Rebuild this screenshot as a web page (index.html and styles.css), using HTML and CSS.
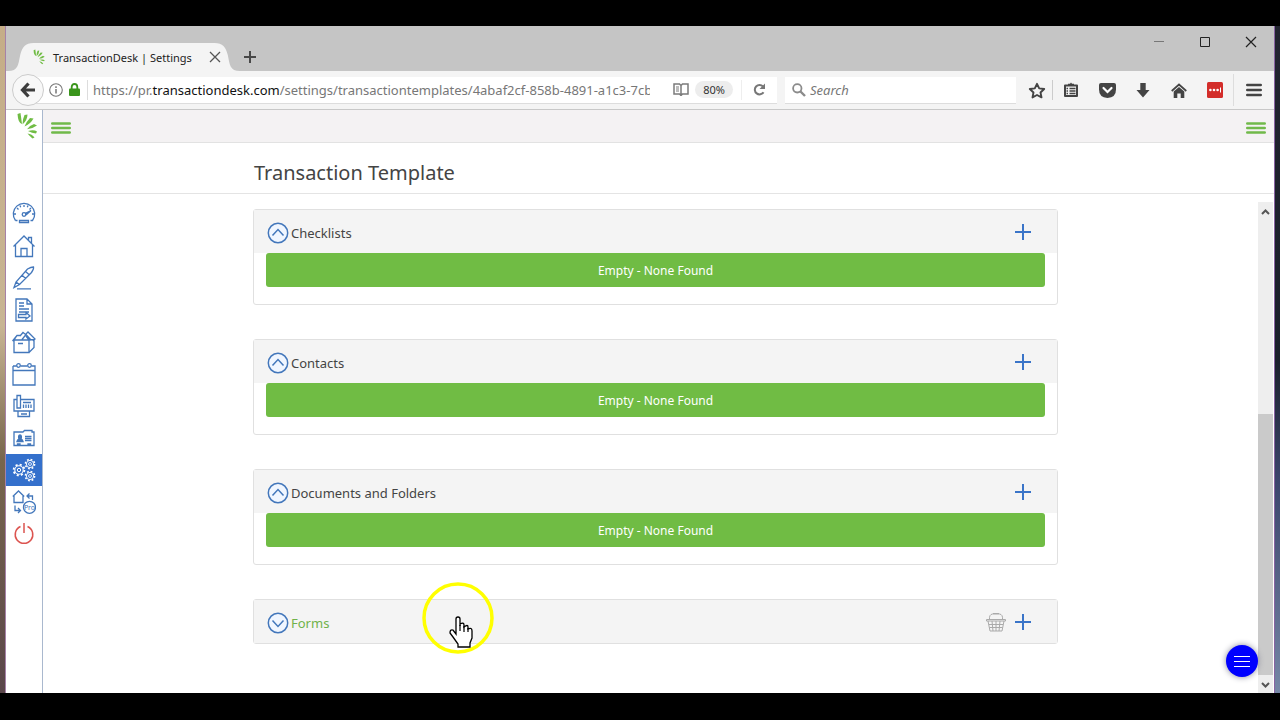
FILE: index.html
```html
<!DOCTYPE html>
<html lang="en">
<head>
<meta charset="utf-8">
<title>TransactionDesk | Settings</title>
<link rel="stylesheet" href="styles.css">
</head>
<body>
<svg class="defs" aria-hidden="true">
  <symbol id="leaf" viewBox="0 0 22 28">
    <g fill="#70bc44">
      <path d="M1.500 2 4.500 1 6 12Q2 11 1.500 2Z"/>
      <path d="M8.500 3 11.500 2.500Q11.500 8 6.500 12.500Q6.500 7 8.500 3Z"/>
      <path d="M14 6 17.500 6.500Q14.500 12 8.500 14.500Q10 10 14 6Z"/>
      <path d="M18 12 21 13.500Q17 16.500 11 17.200Q13.500 13.500 18 12Z"/>
      <path d="M12 19Q18 17.500 21 19.500L20 21.500Q16 21 12 19Z"/>
      <path d="M11.500 21.500Q16 22 18.500 25.500L16.500 26.500Q13.500 24 11.500 21.500Z"/>
    </g>
  </symbol>
  <symbol id="bars" viewBox="0 0 20 12"><path d="M1.300 1.500H18.700M1.300 6H18.700M1.300 10.500H18.700" stroke="currentColor" stroke-width="2.600" stroke-linecap="round"/></symbol>
  <symbol id="plus" viewBox="0 0 16 16"><path d="M8 0V16M0 8H16" stroke="currentColor" stroke-width="2"/></symbol>
  <symbol id="up" viewBox="0 0 22 22"><circle cx="11" cy="11" r="9.700" fill="#f0f6ff" stroke="currentColor" stroke-width="1.500"/><path d="M5.500 13.500 11 7.500 16.500 13.500" fill="none" stroke="currentColor" stroke-width="1.500"/></symbol>
  <symbol id="down" viewBox="0 0 22 22"><circle cx="11" cy="11" r="9.700" fill="#f0f6ff" stroke="currentColor" stroke-width="1.500"/><path d="M5.500 8.500 11 14.500 16.500 8.500" fill="none" stroke="currentColor" stroke-width="1.500"/></symbol>
  <symbol id="gear" viewBox="-7 -7 14 14"><circle r="4.200" fill="none" stroke="currentColor" stroke-width="1.100"/><circle r="5.400" fill="none" stroke="currentColor" stroke-width="1.800" stroke-dasharray="2.100 2.141"/><circle r="1.700" fill="none" stroke="currentColor"/></symbol>
</svg>

<div class="desktop">
<div class="window">
  <header class="titlebar">
    <div class="tab">
      <svg class="tab-shape" viewBox="0 0 228 28" preserveAspectRatio="none"><path d="M0 28C10 28 10 22 12 12C14 4 17 0 25 0H203C211 0 214 4 216 12C218 22 218 28 228 28Z" fill="#f4f4f4"/></svg>
      <svg class="tab-logo"><use href="#leaf"/></svg>
      <span class="tab-title">TransactionDesk | Settings</span>
      <button class="plain tab-close" aria-label="Close tab"><svg width="12" height="12" viewBox="0 0 12 12"><path d="M1 1 11 11M11 1 1 11" stroke="#555" stroke-width="1.300"/></svg></button>
    </div>
    <button class="plain new-tab" aria-label="New tab"><svg width="12" height="12" viewBox="0 0 12 12"><path d="M6 0V12M0 6H12" stroke="#484848" stroke-width="2"/></svg></button>
    <div class="window-buttons">
      <button class="plain" aria-label="Minimize"><svg width="12" height="12" viewBox="0 0 12 12"><path d="M1 5.500H11" stroke="#777"/></svg></button>
      <button class="plain" aria-label="Maximize"><svg width="12" height="12" viewBox="0 0 12 12"><path d="M1.500 1.500H10.500V10.500H1.500Z" fill="none" stroke="#222"/></svg></button>
      <button class="plain" aria-label="Close"><svg width="12" height="12" viewBox="0 0 12 12"><path d="M1 1 11 11M11 1 1 11" stroke="#222" stroke-width="1.200"/></svg></button>
    </div>
  </header>

  <div class="toolbar">
    <button class="plain back" aria-label="Back"><svg width="16" height="16" viewBox="0 0 16 16"><path d="M8.500 1.500 2.500 8 8.500 14.500M3 8H15" fill="none" stroke="#3d3d3d" stroke-width="3.200"/></svg></button>
    <div class="address">
      <svg width="14" height="14" viewBox="0 0 14 14"><circle cx="7" cy="7" r="6.300" fill="none" stroke="#777" stroke-width="1.100"/><path d="M7 6V10.500M7 3.300V4.900" stroke="#777" stroke-width="1.500"/></svg>
      <svg width="11" height="13" viewBox="0 0 11 13"><path d="M2.700 6V4Q2.700 1 5.500 1T8.300 4V6" fill="none" stroke="#3a951c" stroke-width="1.800"/><rect y="5.500" width="11" height="7.500" rx="1" fill="#3a951c"/></svg>
      <span class="url">https://pr.<b>transactiondesk.com</b>/settings/transactiontemplates/4abaf2cf-858b-4891-a1c3-7cb</span>
      <svg class="reader" width="16" height="13" viewBox="0 0 16 13"><path d="M1 1H6.500L8 2.500 9.500 1H15V11H9.500L8 12.500 6.500 11H1ZM8 2.500V12" fill="none" stroke="#7b7b7b" stroke-width="1.500"/><path d="M3 4H6M3 6H6M3 8H6" stroke="#7b7b7b"/></svg>
      <button class="plain percent">80%</button>
      <button class="plain reload" aria-label="Reload"><svg width="13" height="13" viewBox="0 0 13 13"><path d="M10.500 9.200A4.700 4.700 0 1 1 10 3.500" fill="none" stroke="#777" stroke-width="2"/><path d="M12 .5V6H6.500Z" fill="#777"/></svg></button>
    </div>
    <label class="search">
      <svg width="14" height="14" viewBox="0 0 14 14"><circle cx="5.300" cy="5.300" r="4.200" fill="none" stroke="#8b8b8b" stroke-width="1.800"/><path d="M8.500 8.500 13 13" stroke="#8b8b8b" stroke-width="2.400"/></svg>
      <input type="text" placeholder="Search" aria-label="Search">
    </label>
    <div class="tools">
      <button class="plain star" aria-label="Bookmark"><svg width="18" height="17" viewBox="0 0 18 17"><path d="M9 1.800 11.200 6.400 16.200 7 12.500 10.500 13.500 15.400 9 13 4.500 15.400 5.500 10.500 1.800 7 6.800 6.400Z" fill="none" stroke="#444" stroke-width="1.900" stroke-linejoin="round"/></svg></button>
      <button class="plain" aria-label="Bookmarks list"><svg width="16" height="16" viewBox="0 0 16 16"><path d="M2 3.500H14V14H2Z" fill="none" stroke="#444" stroke-width="2" stroke-linejoin="round"/><path d="M5 3V1.700H7L8 .5 9 1.700H11V3Z" fill="#444"/><path d="M3.500 6.500H5M6.500 6.500H12.500M3.500 9H5M6.500 9H12.500M3.500 11.500H5M6.500 11.500H12.500" stroke="#444" stroke-width="1.500"/></svg></button>
      <button class="plain" aria-label="Pocket"><svg width="17" height="15" viewBox="0 0 17 15"><path d="M2 0H15Q17 0 17 2V6.500Q17 14.500 8.500 15Q0 14.500 0 6.500V2Q0 0 2 0Z" fill="#444"/><path d="M4.500 5 8.500 9 12.500 5" fill="none" stroke="#fff" stroke-width="2.200" stroke-linecap="round"/></svg></button>
      <button class="plain" aria-label="Downloads"><svg width="14" height="15" viewBox="0 0 14 15"><path d="M4.300 0H9.700V7H13.500L7 14.500 .5 7H4.300Z" fill="#444"/></svg></button>
      <button class="plain" aria-label="Home"><svg width="16" height="15" viewBox="0 0 16 15"><path d="M.7 8 8 1.500 15.300 8" fill="none" stroke="#444" stroke-width="1.700"/><path d="M2.700 8.500 8 4 13.300 8.500V15H9.700V10.500H6.300V15H2.700Z" fill="#444"/></svg></button>
      <button class="plain" aria-label="Password manager"><svg width="16" height="16" viewBox="0 0 16 16"><rect width="16" height="16" rx="1.500" fill="#d32d2a"/><circle cx="3.400" cy="8" r="1.300" fill="#fff"/><circle cx="7" cy="8" r="1.300" fill="#fff"/><circle cx="10.600" cy="8" r="1.300" fill="#fff"/><path d="M13.500 5.500V10.500" stroke="#fff"/></svg></button>
    </div>
    <button class="plain menu" aria-label="Menu"><svg width="16" height="14" viewBox="0 0 16 14"><path d="M1.300 2H14.700M1.300 7H14.700M1.300 12H14.700" stroke="#444" stroke-width="2.600" stroke-linecap="round"/></svg></button>
  </div>

  <div class="app">
    <nav class="rail" aria-label="Main">
      <a class="brand" href="#" aria-label="TransactionDesk"><svg width="22" height="28"><use href="#leaf"/></svg></a>
      <a href="#" aria-label="Dashboard"><svg viewBox="0 0 24 24"><path d="M3.500 18.500A10.700 10.700 0 1 1 20.500 18.500H18.500M3.500 18.500H5.500M12 3V5M5 6 6.500 7.500M19 6 17.500 7.500M2 12H4M22 12H20M8 3.500 8.700 5.300M16 3.500 15.300 5.300"/><circle cx="12" cy="12.500" r="1.800"/><path d="M13.500 11.300 19 8.500 14 13M7.500 18.500H16.500V20.500H7.500Z"/></svg></a>
      <a href="#" aria-label="Properties"><svg viewBox="0 0 24 24"><path d="M1.500 12.500 12 2 22.500 12.500M3.500 11V22.500H20.500V11M9 22V14.500H15V22M16.500 6V3.500H19.500V9"/></svg></a>
      <a href="#" aria-label="Signatures"><svg viewBox="0 0 24 24"><path d="M2 21.500 4 16 15.500 3Q19 1 21.500 1Q22 3 19.500 6.500L7.500 18.500ZM10 9 13.500 12.500M13 5 17.500 9M14.500 11.500 18 8M4 16 7.500 18.500M5 22.800H19"/></svg></a>
      <a href="#" aria-label="Forms"><svg viewBox="0 0 24 24"><path d="M4 1H15L20 6V23H4ZM15 1V6H20M7 5H12M7 8H12M7 11H17M7 14H17M6.500 16.500H14V14.500L18 18 14 21V19.500H6.500Z"/></svg></a>
      <a href="#" aria-label="Transactions"><svg viewBox="0 0 24 24"><path d="M2 10H17V22.500H2ZM2 10 5 5.500H9M17 10 14 6M17 22.500 22 17.500V9.500L17 10M.5 11 5 5.500M6 13.500H11M8 6 11 2.500 13.500 4.500 16 2 23 9 21 11M10 9.500 14 4.500 19 10"/></svg></a>
      <a href="#" aria-label="Calendar"><svg viewBox="0 0 24 24"><path d="M1 4H4.500M8.500 4H15.500M19.500 4H23V23H1V4M1 8.500H23"/><circle cx="6.500" cy="3.500" r="1.800"/><circle cx="17.500" cy="3.500" r="1.800"/></svg></a>
      <a href="#" aria-label="Fax"><svg viewBox="0 0 24 24"><path d="M5 1.500H8.500V14H5ZM5 5.500H2V17H22V5.500H8.500M11 8.500H19M11.500 10.500V14M14 10.500V14M16.500 10.500V14M19 10.500V14M6 17V22.500H17.500V17M9 20H15"/></svg></a>
      <a href="#" aria-label="Contacts"><svg viewBox="0 0 24 24"><path d="M2 6H11L12.500 4.500H20V6H22V19.500H2ZM5.500 19.500V18H8V19.500M16 19.500V18H18.500V19.500M13 10.500H19.500M13 12.500H19.500M13 14.500H19.500"/><path d="M5 15.500Q5.500 13.500 7 13.500Q5.800 9 8 9T9 13.500Q10.500 13.500 11 15.500Z" fill="currentColor"/></svg></a>
      <a class="active" href="#" aria-label="Settings" aria-current="page"><svg viewBox="0 0 24 24"><use href="#gear" x="0" y="5" width="14" height="14"/><use href="#gear" x="12" y="0" width="12" height="12"/><use href="#gear" x="12" y="12" width="12" height="12"/></svg></a>
      <a href="#" aria-label="Switch to Pro"><svg viewBox="0 0 24 24"><path d="M.8 6.500 6.500 1 12.200 6.500M2 6V12.500H11V6M20.500 10V6H15.500M17.500 3.500 15 6 17.500 8.500M3 15.500V20.500H8M6 18 8.500 20.500 6 23"/><circle cx="17.500" cy="17.300" r="6"/><text x="17.500" y="19.500" class="pro">Pro</text></svg></a>
      <a class="power" href="#" aria-label="Log out"><svg viewBox="0 0 24 24"><path d="M8.500 4.500A8.800 8.800 0 1 0 15.500 4.500M12 1V11"/></svg></a>
    </nav>

    <main class="main">
      <div class="topbar">
        <button class="plain" aria-label="Toggle navigation"><svg width="20" height="12"><use href="#bars"/></svg></button>
        <button class="plain" aria-label="Toggle panel"><svg width="20" height="12"><use href="#bars"/></svg></button>
      </div>
      <div class="heading"><h1>Transaction Template</h1></div>
      <div class="scroller">
        <div class="cards">
          <section class="card">
            <header><button class="plain toggle"><svg width="22" height="22"><use href="#up"/></svg><span>Checklists</span></button><button class="plain add" aria-label="Add checklist"><svg width="16" height="16"><use href="#plus"/></svg></button></header>
            <p class="empty">Empty - None Found</p>
          </section>
          <section class="card">
            <header><button class="plain toggle"><svg width="22" height="22"><use href="#up"/></svg><span>Contacts</span></button><button class="plain add" aria-label="Add contact"><svg width="16" height="16"><use href="#plus"/></svg></button></header>
            <p class="empty">Empty - None Found</p>
          </section>
          <section class="card">
            <header><button class="plain toggle"><svg width="22" height="22"><use href="#up"/></svg><span>Documents and Folders</span></button><button class="plain add" aria-label="Add document"><svg width="16" height="16"><use href="#plus"/></svg></button></header>
            <p class="empty">Empty - None Found</p>
          </section>
          <section class="card collapsed">
            <header><button class="plain toggle"><svg width="22" height="22"><use href="#down"/></svg><span>Forms</span></button>
              <button class="plain basket" aria-label="Basket"><svg width="20" height="20" viewBox="0 0 20 20"><path d="M.5 7.500H19.500V9H.5ZM2 9 4 19H16L18 9M3 12.500H17M3.500 15.500H16.500M6 9 7 19M10 9V19M14 9 13 19M3.500 7.500Q3 2.500 6.500 2H13.500Q17 2.500 16.500 7.500M7 1.500H13" fill="none" stroke="#aaa"/></svg></button>
              <button class="plain add" aria-label="Add form"><svg width="16" height="16"><use href="#plus"/></svg></button></header>
            <svg class="pointer" width="72" height="72" viewBox="0 0 72 72" aria-hidden="true">
              <circle cx="36" cy="36" r="34" fill="none" stroke="#ff0" stroke-width="3.500"/>
              <path d="M34 52V37Q34 35 36 35T38 37V44L38 42Q42 40 42 43V45Q46 42 46 45V47Q50 45 50 49V56L48 61V65H36V62L31 55L28 51Q28 47 31 48Z" fill="#fff" stroke="#000" stroke-width="1.300"/>
              <path d="M38 43V49M42 44V50M46 46V50" stroke="#000" stroke-width="1.200"/>
            </svg>
          </section>
        </div>
        <div class="scrollbar" aria-hidden="true">
          <svg width="15" height="18" viewBox="0 0 15 18"><path d="M4 12 7.500 8.500 11 12" fill="none" stroke="#555" stroke-width="2"/></svg>
          <div class="track"><div class="thumb"></div></div>
          <svg width="15" height="18" viewBox="0 0 15 18"><path d="M4 8 7.500 11.500 11 8" fill="none" stroke="#555" stroke-width="2"/></svg>
        </div>
      </div>
      <button class="plain fab" aria-label="Quick menu"><svg width="16" height="12" viewBox="0 0 16 12"><path d="M0 1.500H16M0 6.500H16M0 11.500H16" stroke="#fff"/></svg></button>
    </main>
  </div>
</div>
</div>
</body>
</html>
```
FILE: styles.css
```css
* { box-sizing: border-box; }
body {
  margin: 0;
  min-height: 100vh;
  display: flex;
  padding: 26px 0 27px;
  background: #000;
  font-family: "Noto Sans", sans-serif;
}
.defs { position: absolute; width: 0; height: 0; }
.plain {
  margin: 0;
  padding: 0;
  border: 0;
  background: none;
  color: inherit;
  font: inherit;
  display: flex;
  align-items: center;
  justify-content: center;
}
.desktop {
  flex: 1;
  min-width: 0;
  display: flex;
  padding: 0 5px;
  background:
    linear-gradient(#c5ad87, #c8b593 45%, #78664d 65%, #5a464a) left / 50% 100% no-repeat,
    linear-gradient(#222430, #1b202c 50%, #3c456c 68%, #7687a6) right / 50% 100% no-repeat;
}
.window {
  flex: 1;
  min-width: 0;
  display: flex;
  flex-direction: column;
  border-left: 1px solid #a682a8;
  border-right: 1px solid #8863a2;
  background: #fff;
}

/* Browser chrome */
.titlebar {
  height: 45px;
  display: flex;
  align-items: flex-end;
  background: #c5c5c5;
}
.tab {
  position: relative;
  width: 232px;
  height: 28px;
  margin-left: 2px;
  padding: 0 19px 0 24px;
  display: flex;
  align-items: center;
  font-size: 11px;
  color: #222;
}
.tab-shape { position: absolute; inset: 0; width: 100%; height: 100%; }
.tab-logo, .tab-title, .tab-close { position: relative; }
.tab-logo { width: 14px; height: 16px; margin-right: 7px; flex: none; }
.tab-title { flex: 1; white-space: nowrap; }
.tab-close { width: 12px; height: 28px; }
.new-tab { width: 20px; height: 28px; }
.window-buttons { margin-left: auto; align-self: flex-start; display: flex; }
.window-buttons button { width: 46px; height: 31px; }

.toolbar {
  height: 39px;
  padding-left: 6px;
  display: flex;
  align-items: center;
  background: #f4f4f4;
  border-bottom: 1px solid #c8c8c8;
}
.back {
  position: relative;
  flex: none;
  width: 32px;
  height: 32px;
  border: 1px solid #ccc;
  border-radius: 50%;
  background: #f8f8f8;
}
.address {
  flex: 1;
  min-width: 0;
  height: 27px;
  margin-left: -8px;
  padding: 0 9px 0 13px;
  display: flex;
  align-items: center;
  gap: 6px;
  background: #fff;
  border-bottom: 1px solid #ddd;
}
.address svg { flex: none; }
.url {
  flex: 1;
  min-width: 0;
  margin-left: 1px;
  padding-left: 5px;
  border-left: 1px solid #ddd;
  overflow: hidden;
  white-space: nowrap;
  font-size: 13px;
  line-height: 20px;
  color: #777;
}
.url b { font-weight: 400; color: #111; }
.address .reader { margin-left: 17px; }
.percent {
  width: 38px;
  height: 17px;
  border-radius: 9px;
  background: #ededed;
  font-size: 11px;
  color: #333;
}
.reload { width: 27px; height: 20px; margin-left: 2px; padding-left: 8px; border-left: 1px solid #eee; }
.search {
  flex: none;
  width: 231px;
  height: 27px;
  margin-left: 8px;
  padding-left: 7px;
  display: flex;
  align-items: center;
  gap: 4px;
  background: #fff;
  border-bottom: 1px solid #ddd;
}
.search input {
  flex: 1;
  min-width: 0;
  border: 0;
  padding: 0;
  font: italic 13px "Noto Sans", sans-serif;
  background: none;
}
.search input::placeholder { color: #777; opacity: 1; }
.tools { flex: none; display: flex; margin-left: 5px; }
.tools button { width: 36px; height: 20px; }
.tools .star { width: 32px; border-right: 1px solid #ccc; }
.menu { flex: none; width: 41px; height: 32px; border-left: 1px solid #ddd; }

/* Application */
.app { flex: 1; display: flex; }
.rail {
  flex: none;
  width: 37px;
  border-right: 1px solid #a9b8ce;
  color: #4377bb;
}
.rail a {
  height: 32px;
  display: flex;
  align-items: center;
  justify-content: center;
  color: inherit;
}
.rail a svg {
  width: 24px;
  height: 24px;
  fill: none;
  stroke: currentColor;
  stroke-width: 1.3px;
}
.rail .brand { margin-bottom: 56px; padding-left: 6px; }
.rail .brand svg { width: 22px; height: 28px; stroke: none; }
.rail .active { background: #3470cc; color: #fff; }
.rail .active svg { stroke-width: 1px; }
.rail .power { color: #dc5450; }
.rail .power svg { stroke-width: 1.5px; }
.rail a .pro { font: 7px "Noto Sans", sans-serif; text-anchor: middle; fill: currentColor; stroke: none; }

.main {
  position: relative;
  flex: 1;
  min-width: 0;
  display: flex;
  flex-direction: column;
}
.topbar {
  height: 33px;
  padding: 3px 8px 0;
  display: flex;
  align-items: center;
  justify-content: space-between;
  background: #f4f2f3;
  border-bottom: 1px solid #e2e2e2;
  color: #70b94a;
}
.heading {
  height: 51px;
  padding: 9px 216px 0 210px;
  display: flex;
  align-items: center;
  border-bottom: 1px solid #e4e4e4;
}
h1 {
  margin: 0;
  padding: 0 1px;
  font-size: 20px;
  line-height: 28px;
  font-weight: 400;
  color: #444;
}
.scroller { flex: 1; display: flex; }
.cards {
  flex: 1;
  min-width: 0;
  padding: 15px 200px 40px 210px;
  display: flex;
  flex-direction: column;
  gap: 34px;
}
.card {
  position: relative;
  border: 1px solid #e0e0e0;
  border-radius: 3px;
  padding-bottom: 17px;
}
.card header {
  height: 43px;
  padding: 2px 26px 0 13px;
  display: flex;
  align-items: center;
  background: #f4f4f4;
  color: #3a74c8;
}
.toggle { margin-right: auto; gap: 2px; font-size: 13px; }
.toggle svg { color: #4377bb; }
.toggle span { color: #444; }
.add, .basket { padding-bottom: 2px; }
.empty {
  margin: 0 12px;
  padding: 9px 8px 7px;
  border-radius: 3px;
  background: #70bc44;
  color: #fff;
  font-size: 12px;
  line-height: 18px;
  text-align: center;
}
.collapsed { padding-bottom: 0; }
.collapsed .toggle span { color: #70b24a; }
.basket { margin-right: 9px; }
.pointer { position: absolute; top: -18px; left: 168px; }

.scrollbar {
  flex: none;
  width: 15px;
  margin: 8px 1px 0 0;
  display: flex;
  flex-direction: column;
  background: #eee;
}
.track { flex: 1; padding-top: 194px; display: flex; }
.thumb { flex: 1; background: #cacaca; }
.fab {
  position: absolute;
  right: 16px;
  bottom: 16px;
  width: 32px;
  height: 32px;
  border-radius: 50%;
  background: #00f;
  box-shadow: 0 0 6px #889;
}
```
